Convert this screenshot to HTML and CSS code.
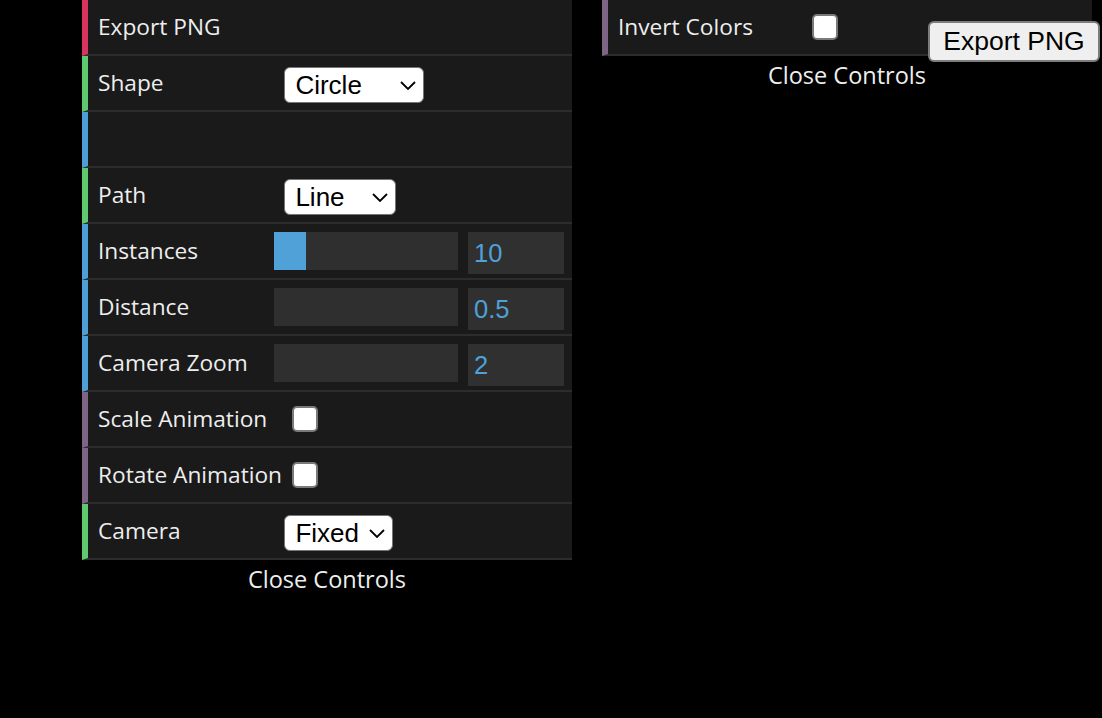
FILE: index.html
```html
<!DOCTYPE html>
<html>
<head>
<meta charset="utf-8">
<link rel="stylesheet" href="styles.css">
<title>Controls</title>
</head>
<body>
<div class="stage">
  <div class="gui">
    <ul class="rows">
      <li class="row fn"><span class="name">Export PNG</span></li>
      <li class="row opt">
        <span class="name">Shape</span>
        <div class="c">
          <div class="select select-shape">
            <select><option>Circle</option><option>Square</option><option>Triangle</option></select>
            <svg class="chev" viewBox="0 0 16 9" width="16" height="9"><polyline points="1,1 8,8 15,1" fill="none" stroke="#000" stroke-width="1.8"/></svg>
          </div>
        </div>
      </li>
      <li class="row num"></li>
      <li class="row opt">
        <span class="name">Path</span>
        <div class="c">
          <div class="select select-path">
            <select><option>Line</option><option>Circle</option></select>
            <svg class="chev" viewBox="0 0 16 9" width="16" height="9"><polyline points="1,1 8,8 15,1" fill="none" stroke="#000" stroke-width="1.8"/></svg>
          </div>
        </div>
      </li>
      <li class="row num">
        <span class="name">Instances</span>
        <div class="c c-num">
          <div class="slider"><div class="fg" style="width:17%"></div></div>
          <input class="numbox" type="text" value="10">
        </div>
      </li>
      <li class="row num">
        <span class="name">Distance</span>
        <div class="c c-num">
          <div class="slider"><div class="fg" style="width:0%"></div></div>
          <input class="numbox" type="text" value="0.5">
        </div>
      </li>
      <li class="row num">
        <span class="name">Camera Zoom</span>
        <div class="c c-num">
          <div class="slider"><div class="fg" style="width:0%"></div></div>
          <input class="numbox" type="text" value="2">
        </div>
      </li>
      <li class="row bool">
        <span class="name">Scale Animation</span>
        <div class="c"><input class="check" type="checkbox"></div>
      </li>
      <li class="row bool">
        <span class="name">Rotate Animation</span>
        <div class="c"><input class="check" type="checkbox"></div>
      </li>
      <li class="row opt">
        <span class="name">Camera</span>
        <div class="c">
          <div class="select select-camera">
            <select><option>Fixed</option><option>Orbit</option></select>
            <svg class="chev" viewBox="0 0 16 9" width="16" height="9"><polyline points="1,1 8,8 15,1" fill="none" stroke="#000" stroke-width="1.8"/></svg>
          </div>
        </div>
      </li>
    </ul>
    <div class="close">Close Controls</div>
  </div>

  <div class="gui">
    <ul class="rows">
      <li class="row bool">
        <span class="name">Invert Colors</span>
        <div class="c"><input class="check" type="checkbox"></div>
      </li>
    </ul>
    <div class="close">Close Controls</div>
  </div>
</div>
<button class="export">Export PNG</button>
</body>
</html>
```

FILE: styles.css
```css
html, body {
  margin: 0;
  padding: 0;
  background: #000;
  height: 100%;
}

body {
  font-family: "Open Sans", "DejaVu Sans", sans-serif;
  color: #eee;
  position: relative;
  overflow: hidden;
}

.stage {
  display: flex;
  align-items: flex-start;
  gap: 30px;
  padding-left: 82px;
}

.gui {
  width: 490px;
  flex: none;
}

.rows {
  list-style: none;
  margin: 0;
  padding: 0;
  background: #1a1a1a;
}

.row {
  height: 54px;
  display: flex;
  align-items: center;
  padding: 0 8px 0 10px;
  border-left: 6px solid #4e9fd5;
  border-bottom: 2px solid #2c2c2c;
  background: #1a1a1a;
}

.row.fn { border-left-color: #d9345f; }
.row.opt { border-left-color: #5ec96e; }
.row.num { border-left-color: #4e9fd5; }
.row.bool { border-left-color: #7e6586; }

.name {
  width: 40%;
  flex: none;
  font-size: 22.7px;
  line-height: 54px;
  white-space: nowrap;
  overflow: visible;
}

.c {
  width: 60%;
  flex: none;
  display: flex;
  align-items: center;
  height: 54px;
}

.c-num {
  align-items: flex-start;
  justify-content: space-between;
}

.slider {
  margin-left: -10px;
  margin-top: 8px;
  width: 184px;
  height: 38px;
  background: #2f2f2f;
  flex: none;
}

.slider .fg {
  height: 100%;
  background: #4fa1d7;
}

.numbox {
  margin-top: 8px;
  width: 96px;
  height: 42px;
  box-sizing: border-box;
  border: none;
  outline: none;
  background: #303030;
  color: #4fa1d7;
  font-family: "Liberation Sans", Arial, sans-serif;
  font-size: 25.5px;
  padding: 0 0 0 6px;
}

.select {
  position: relative;
  height: 36px;
  margin-top: 3px;
}

.select select {
  appearance: none;
  -webkit-appearance: none;
  width: 100%;
  height: 100%;
  box-sizing: border-box;
  background: #fff;
  color: #000;
  border: 1px solid #767676;
  border-radius: 6px;
  font-family: "Liberation Sans", Arial, sans-serif;
  font-size: 26px;
  padding: 0 0 0 10px;
  margin: 0;
  outline: none;
}

.select-shape { width: 140px; }
.select-path { width: 112px; }
.select-camera { width: 109px; }

.chev {
  position: absolute;
  right: 8px;
  top: 14px;
  pointer-events: none;
}

.check {
  appearance: none;
  -webkit-appearance: none;
  margin: 0 0 0 8px;
  width: 26px;
  height: 26px;
  box-sizing: border-box;
  background: #fff;
  border: 2px solid #7a7a7a;
  border-radius: 5px;
}

.close {
  height: 40px;
  line-height: 38px;
  text-align: center;
  font-size: 23.5px;
  color: #eee;
}

.export {
  position: absolute;
  left: 928px;
  top: 21px;
  width: 172px;
  height: 41px;
  box-sizing: border-box;
  background: #efefef;
  border: 2px solid #7d7d7d;
  border-radius: 6px;
  color: #000;
  font-family: "Liberation Sans", Arial, sans-serif;
  font-size: 26.5px;
  padding: 0;
}
```
